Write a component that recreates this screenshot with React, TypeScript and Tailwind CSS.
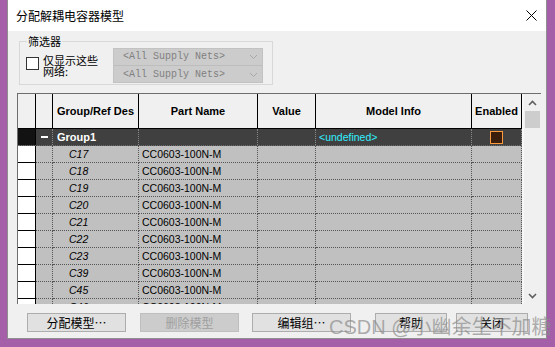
import React from "react";

const rows = ["C17", "C18", "C19", "C20", "C21", "C22", "C23", "C39", "C45", "C46"];

const cjk = "font-['Noto_Sans_CJK_SC',sans-serif]";
const ui = "font-['Liberation_Sans',Arial,sans-serif]";

function Chevron({ up }: { up?: boolean }) {
  return (
    <svg width="9" height="6" viewBox="0 0 9 6">
      <path d={up ? "M1 5 L4.5 1.5 L8 5" : "M1 1 L4.5 4.5 L8 1"} fill="none" stroke="#606060" strokeWidth="1.6" />
    </svg>
  );
}

function Dropdown({ last }: { last?: boolean }) {
  return (
    <div className={`h-[17px] flex items-center pl-[9px] pr-[4px] ${last ? "" : "border-b border-[#bdbdbd]"}`}>
      <span className="font-['Liberation_Mono',monospace] text-[10px] text-[#808080] flex-1 leading-[16px]">&lt;All Supply Nets&gt;</span>
      <svg width="9" height="6" viewBox="0 0 9 6">
        <path d="M1 1 L4.5 4.5 L8 1" fill="none" stroke="#a8a8a8" strokeWidth="1" />
      </svg>
    </div>
  );
}

function HeaderCell({ w, label }: { w: string; label?: string }) {
  return (
    <div className={`${w} h-full border-r border-black flex items-center justify-center text-[11px] font-bold text-black`}>
      {label}
    </div>
  );
}

export default function App() {
  return (
    <div className="w-[555px] h-[347px] bg-[#a45fa8] relative overflow-hidden">
      <div className="ml-[7px] w-[540px] h-[339px] bg-[#f0f0f0] border-l border-r border-b border-[#8f8f8f] flex flex-col">
        <div className="h-[31px] bg-white flex items-center justify-between pl-[8px] pr-[9px] shrink-0">
          <span className={`${cjk} text-[12px] text-black`}>分配解耦电容器模型</span>
          <svg width="11" height="11" viewBox="0 0 11 11">
            <path d="M0.5 0.5 L10.5 10.5 M10.5 0.5 L0.5 10.5" stroke="#000" strokeWidth="1" />
          </svg>
        </div>

        <div className="pt-[10px]">
          <div className="ml-[11px] w-[254px] h-[44px] border border-[#d8d8d8] relative flex pl-[6px]">
            <span className={`${cjk} absolute -top-[9px] left-[7px] px-[1px] bg-[#f0f0f0] text-[11px] leading-[16px] text-black`}>筛选器</span>
            <div className="w-[87px] pt-[15px] flex gap-[4px]">
              <div className="w-[13px] h-[13px] border border-[#333] bg-white shrink-0" />
              <div className={`${cjk} text-[11px] leading-[11px] text-black -mt-[2px]`}>
                仅显示这些
                <br />
                网络:
              </div>
            </div>
            <div className="mt-[6px] w-[150px] h-[35px] bg-[#cccccc] border border-[#c2c2c2]">
              <Dropdown />
              <Dropdown last />
            </div>
          </div>

          <div className={`${ui} mt-[8px] ml-[9px] w-[524px] h-[211px] border-t border-l border-[#6e6e6e] flex overflow-hidden`}>
            <div className="w-[504px] flex flex-col">
              <div className="h-[35px] flex border-b border-black shrink-0">
                <HeaderCell w="w-[18px]" />
                <HeaderCell w="w-[17px]" />
                <HeaderCell w="w-[86px]" label="Group/Ref Des" />
                <HeaderCell w="w-[119px]" label="Part Name" />
                <HeaderCell w="w-[58px]" label="Value" />
                <HeaderCell w="w-[156px]" label="Model Info" />
                <HeaderCell w="w-[50px]" label="Enabled" />
              </div>

              <div className="h-[17px] flex shrink-0 bg-[#404040] border-b border-dotted border-[#6a6a6a]">
                <div className="w-[18px] bg-[#121212] border-r border-black" />
                <div className="w-[17px] border-r border-dotted border-[#8a8a8a] flex items-center justify-center">
                  <div className="w-[7px] h-[2px] bg-white" />
                </div>
                <div className="w-[86px] border-r border-dotted border-[#8a8a8a] pl-[4px] text-[11px] font-bold text-white leading-[16px]">Group1</div>
                <div className="w-[119px] border-r border-dotted border-[#8a8a8a]" />
                <div className="w-[58px] border-r border-dotted border-[#8a8a8a]" />
                <div className="w-[156px] border-r border-dotted border-[#8a8a8a] pl-[3px] text-[10.5px] text-[#33f0ff] leading-[16px]">&lt;undefined&gt;</div>
                <div className="w-[50px] border-r border-dotted border-[#8a8a8a] flex items-center justify-center">
                  <div className="w-[13px] h-[13px] border border-[#ff9a3c] bg-[#3a1d0a]" />
                </div>
              </div>

              {rows.map((r) => (
                <div key={r} className="h-[17px] flex shrink-0 text-[10.5px] leading-[16px] text-black">
                  <div className="w-[18px] bg-white border-r border-b border-black" />
                  <div className="w-[17px] bg-[#c0c0c0] border-r border-b border-dotted border-[#555]" />
                  <div className="w-[86px] bg-[#c0c0c0] border-r border-b border-dotted border-[#555] pl-[16px] italic">{r}</div>
                  <div className="w-[119px] bg-[#c0c0c0] border-r border-b border-dotted border-[#555] pl-[3px]">CC0603-100N-M</div>
                  <div className="w-[58px] bg-[#c0c0c0] border-r border-b border-dotted border-[#555]" />
                  <div className="w-[156px] bg-[#c0c0c0] border-r border-b border-dotted border-[#555]" />
                  <div className="w-[50px] bg-[#c0c0c0] border-r border-b border-dotted border-[#555]" />
                </div>
              ))}
            </div>

            <div className="w-[19px] pl-[2px] bg-[#f7f7f7]">
              <div className="w-[17px] h-full bg-[#f0f0f0] flex flex-col">
                <div className="h-[17px] flex items-center justify-center">
                  <Chevron up />
                </div>
                <div className="h-[17px] mx-[1px] bg-[#cdcdcd]" />
                <div className="flex-1" />
                <div className="h-[17px] flex items-center justify-center">
                  <Chevron />
                </div>
              </div>
            </div>
          </div>

          <div className={`${cjk} mt-[9px] ml-[19px] flex text-[12px]`}>
            <div className="w-[99px] h-[19px] bg-[#e1e1e1] border border-[#adadad] flex items-center justify-center text-black">分配模型…</div>
            <div className="ml-[14px] w-[99px] h-[19px] bg-[#cccccc] border border-[#bfbfbf] flex items-center justify-center text-[#a0a0a0]">删除模型</div>
            <div className="ml-[13px] w-[99px] h-[19px] bg-[#e1e1e1] border border-[#adadad] flex items-center justify-center text-black">编辑组…</div>
            <div className="ml-[24px] w-[72px] h-[19px] bg-[#e1e1e1] border border-[#adadad] flex items-center justify-center text-black">帮助</div>
            <div className="ml-[9px] w-[72px] h-[19px] bg-[#e1e1e1] border border-[#adadad] flex items-center justify-center text-black">关闭</div>
          </div>
        </div>
      </div>

      <div className={`absolute left-[329px] top-[314px] text-[20px] leading-[26px] text-[rgba(140,140,140,0.7)] font-['Liberation_Sans','Noto_Sans_CJK_SC',sans-serif]`}>
        CSDN @小幽余生不加糖
      </div>
    </div>
  );
}
